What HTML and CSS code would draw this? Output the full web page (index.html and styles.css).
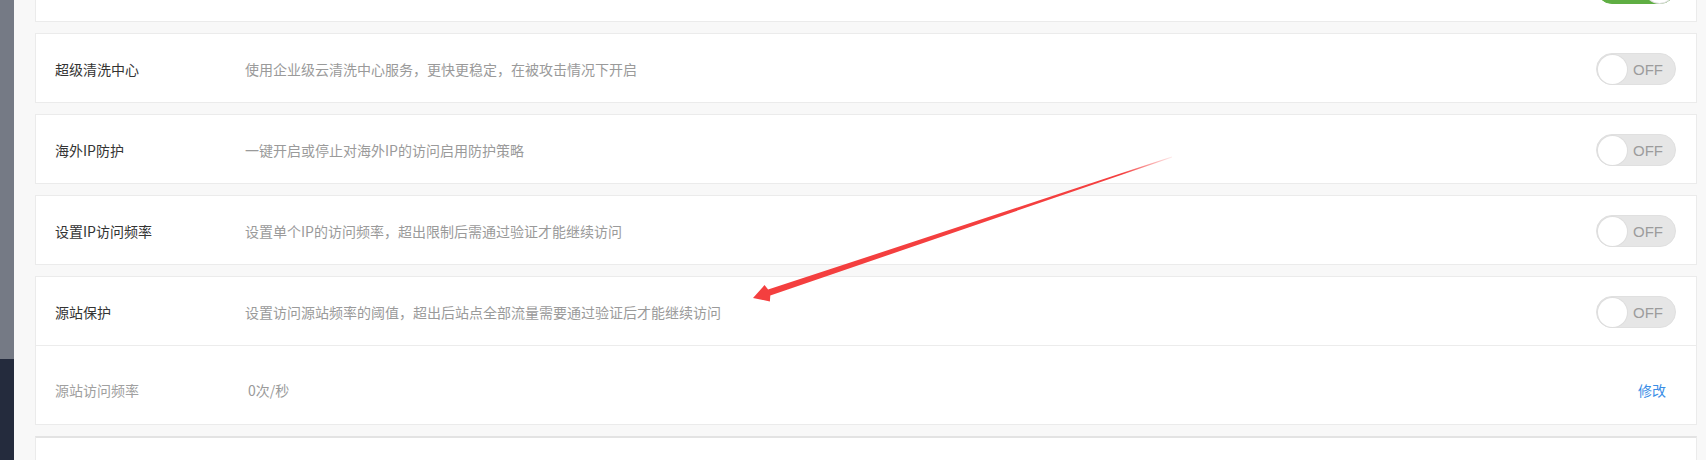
FILE: index.html
```html
<!DOCTYPE html>
<html lang="zh-CN">
<head>
<meta charset="utf-8">
<title>安全设置</title>
<link rel="stylesheet" href="styles.css">
</head>
<body>
<div class="page">
  <aside class="sidebar">
    <div class="sidebar-top"></div>
    <div class="sidebar-bottom"></div>
  </aside>
  <main class="main">
    <div class="list">
      <section class="card">
        <div class="row">
          <div class="title"></div>
          <div class="desc"></div>
          <div class="switch on"><span class="label"></span><span class="knob"></span></div>
        </div>
      </section>
      <section class="card">
        <div class="row">
          <div class="title">超级清洗中心</div>
          <div class="desc">使用企业级云清洗中心服务，更快更稳定，在被攻击情况下开启</div>
          <div class="switch"><span class="knob"></span><span class="label">OFF</span></div>
        </div>
      </section>
      <section class="card">
        <div class="row">
          <div class="title">海外IP防护</div>
          <div class="desc">一键开启或停止对海外IP的访问启用防护策略</div>
          <div class="switch"><span class="knob"></span><span class="label">OFF</span></div>
        </div>
      </section>
      <section class="card">
        <div class="row">
          <div class="title">设置IP访问频率</div>
          <div class="desc">设置单个IP的访问频率，超出限制后需通过验证才能继续访问</div>
          <div class="switch"><span class="knob"></span><span class="label">OFF</span></div>
        </div>
      </section>
      <section class="card">
        <div class="row">
          <div class="title">源站保护</div>
          <div class="desc">设置访问源站频率的阈值，超出后站点全部流量需要通过验证后才能继续访问</div>
          <div class="switch"><span class="knob"></span><span class="label">OFF</span></div>
        </div>
        <div class="subrow">
          <div class="sub-title">源站访问频率</div>
          <div class="sub-value">0次/秒</div>
          <a class="edit" href="#">修改</a>
        </div>
      </section>
      <section class="card card-next">
        <div class="row"></div>
      </section>
    </div>
  </main>
  <svg class="arrow" width="1706" height="460" viewBox="0 0 1706 460" aria-hidden="true">
    <defs>
      <linearGradient id="fade" gradientUnits="userSpaceOnUse" x1="1172" y1="157" x2="753" y2="298">
        <stop offset="0" stop-color="#f43f3f" stop-opacity="0.1"/>
        <stop offset="0.12" stop-color="#f43f3f" stop-opacity="1"/>
        <stop offset="1" stop-color="#f43f3f" stop-opacity="1"/>
      </linearGradient>
    </defs>
    <polygon fill="url(#fade)" points="753,298 764.5,285.1 768.1,289.6 1171.9,156.6 1172.1,157.4 770.3,295.6 769.9,301.5"/>
  </svg>
</div>
</body>
</html>
```

FILE: styles.css
```css
* { box-sizing: border-box; }

html, body {
  margin: 0;
  padding: 0;
  height: 460px;
  overflow: hidden;
  background: #f8f8f8;
}

body {
  font-family: "Noto Sans CJK SC", "Microsoft YaHei", sans-serif;
  font-size: 14px;
}

.page {
  position: relative;
  display: flex;
  height: 460px;
  overflow: hidden;
}

.sidebar {
  width: 14px;
  flex: none;
  display: flex;
  flex-direction: column;
}

.sidebar-top {
  height: 359px;
  background: #757a85;
}

.sidebar-bottom {
  flex: 1;
  background: #242b3d;
}

.main {
  flex: 1;
  padding: 0 9px 0 21px;
}

.list {
  margin-top: -48px;
  display: flex;
  flex-direction: column;
  gap: 11px;
}

.card {
  background: #fff;
  border: 1px solid #ebebeb;
}

.card-next {
  border-top: 2px solid #e3e3e3;
}

.row {
  height: 68px;
  display: flex;
  align-items: center;
  padding: 2px 20px 0 19px;
}

.title {
  width: 190px;
  flex: none;
  color: #333;
}

.desc {
  flex: 1;
  color: #9a9a9a;
}

.switch {
  width: 80px;
  height: 32px;
  flex: none;
  border-radius: 16px;
  background: #e6e6e6;
  border: 1px solid #e0e0e0;
  display: flex;
  align-items: center;
  padding: 0 1px;
}

.knob {
  width: 29px;
  height: 29px;
  border-radius: 50%;
  background: #fff;
  box-shadow: 0 0 0 1px #dedede;
  flex: none;
}

.label {
  flex: 1;
  text-align: center;
  padding-right: 5px;
  font-family: "Liberation Sans", Arial, sans-serif;
  font-size: 15px;
  color: #9c9c9c;
}

.switch.on {
  background: #5fae43;
  border-color: #5fae43;
}

.switch.on .label {
  color: #fff;
  padding: 0 0 0 5px;
}

.subrow {
  border-top: 1px solid #ececec;
  height: 79px;
  display: flex;
  align-items: center;
  padding: 9px 30px 0 19px;
}

.sub-title {
  width: 193px;
  flex: none;
  color: #a0a0a0;
}

.sub-value {
  flex: 1;
  color: #9a9a9a;
}

.edit {
  color: #3a8ee6;
  text-decoration: none;
}

.arrow {
  position: absolute;
  left: 0;
  top: 0;
  pointer-events: none;
}
```
